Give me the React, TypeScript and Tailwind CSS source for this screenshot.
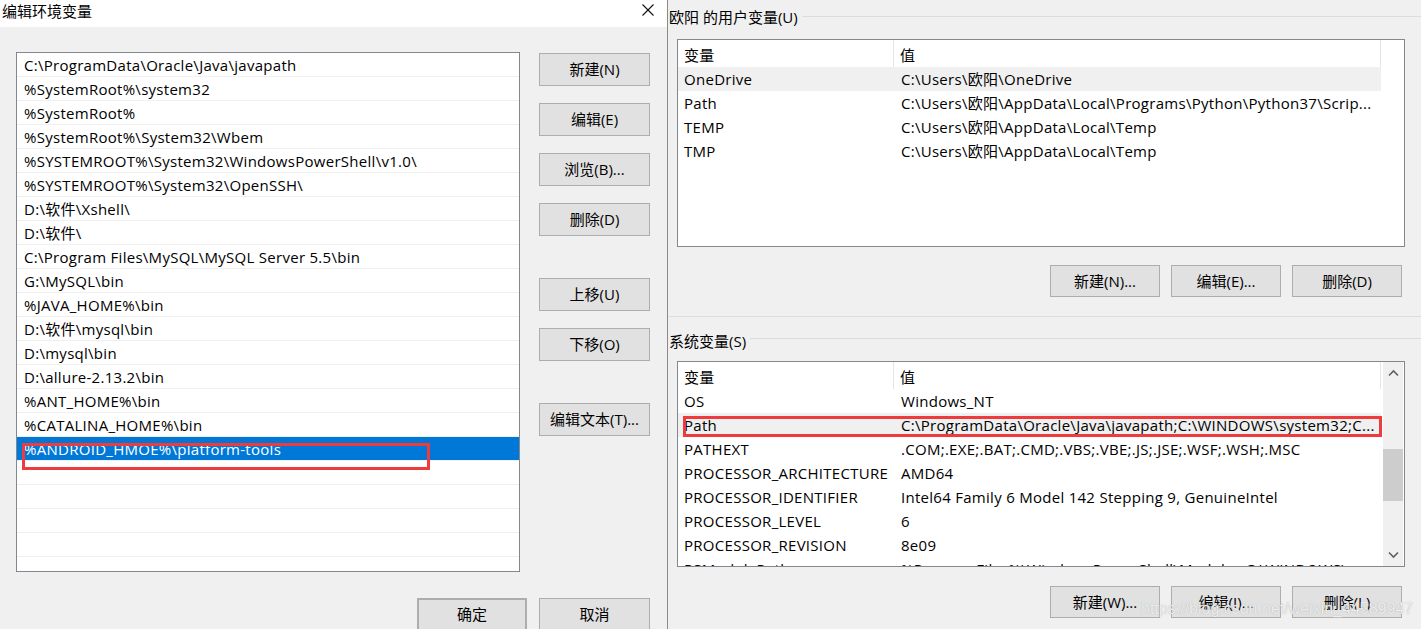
import type { ReactNode } from "react";

const pathItems = [
  "C:\\ProgramData\\Oracle\\Java\\javapath",
  "%SystemRoot%\\system32",
  "%SystemRoot%",
  "%SystemRoot%\\System32\\Wbem",
  "%SYSTEMROOT%\\System32\\WindowsPowerShell\\v1.0\\",
  "%SYSTEMROOT%\\System32\\OpenSSH\\",
  "D:\\软件\\Xshell\\",
  "D:\\软件\\",
  "C:\\Program Files\\MySQL\\MySQL Server 5.5\\bin",
  "G:\\MySQL\\bin",
  "%JAVA_HOME%\\bin",
  "D:\\软件\\mysql\\bin",
  "D:\\mysql\\bin",
  "D:\\allure-2.13.2\\bin",
  "%ANT_HOME%\\bin",
  "%CATALINA_HOME%\\bin",
  "%ANDROID_HMOE%\\platform-tools",
  "",
  "",
  "",
  "",
  "",
];

const userVars = [
  ["OneDrive", "C:\\Users\\欧阳\\OneDrive"],
  ["Path", "C:\\Users\\欧阳\\AppData\\Local\\Programs\\Python\\Python37\\Scrip..."],
  ["TEMP", "C:\\Users\\欧阳\\AppData\\Local\\Temp"],
  ["TMP", "C:\\Users\\欧阳\\AppData\\Local\\Temp"],
];

const systemVars = [
  ["OS", "Windows_NT"],
  ["Path", "C:\\ProgramData\\Oracle\\Java\\javapath;C:\\WINDOWS\\system32;C..."],
  ["PATHEXT", ".COM;.EXE;.BAT;.CMD;.VBS;.VBE;.JS;.JSE;.WSF;.WSH;.MSC"],
  ["PROCESSOR_ARCHITECTURE", "AMD64"],
  ["PROCESSOR_IDENTIFIER", "Intel64 Family 6 Model 142 Stepping 9, GenuineIntel"],
  ["PROCESSOR_LEVEL", "6"],
  ["PROCESSOR_REVISION", "8e09"],
  ["PSModulePath", "%ProgramFiles%\\WindowsPowerShell\\Modules;C:\\WINDOWS\\s..."],
];

function Btn({ children, className = "" }: { children: ReactNode; className?: string }) {
  return (
    <button
      type="button"
      className={`flex shrink-0 items-center justify-center border border-[#adadad] bg-[#e1e1e1] text-[15px] text-black ${className}`}
    >
      {children}
    </button>
  );
}

function VarTable({
  rows,
  highlight,
  height,
  scrollbar,
}: {
  rows: string[][];
  highlight: number;
  height: string;
  scrollbar?: boolean;
}) {
  return (
    <div className={`ml-[9px] flex w-[728px] overflow-hidden border border-[#828790] bg-white ${height}`}>
      <div className="w-[703px] shrink-0 tracking-[0.28px]">
        {/* header */}
        <div className="flex h-[27px] items-center">
          <div className="h-full w-[216px] border-r border-[#e5e5e5] pl-[6px] leading-[30px]">变量</div>
          <div className="h-full flex-1 border-r border-[#e5e5e5] pl-[6px] leading-[30px]">值</div>
        </div>
        {rows.map(([name, value], i) => (
          <div
            key={name}
            className={`flex h-[24px] items-center whitespace-nowrap ${i === highlight ? "bg-[#f0f0f0]" : ""}`}
          >
            <div className="w-[216px] shrink-0 overflow-hidden pl-[6px]">{name}</div>
            <div className="flex-1 overflow-hidden pl-[7px]">{value}</div>
          </div>
        ))}
      </div>
      {scrollbar && (
        <div className="ml-[2px] flex w-[20px] flex-col items-center bg-[#f0f0f0]">
          <svg className="mt-[7px] h-[8px] w-[11px]" viewBox="0 0 11 8" fill="none" stroke="#606060" strokeWidth="1.6">
            <polyline points="1,6.5 5.5,2 10,6.5" />
          </svg>
          <div className="mt-[72px] h-[52px] w-full bg-[#cdcdcd]" />
          <div className="flex-1" />
          <svg className="mb-[7px] h-[8px] w-[11px]" viewBox="0 0 11 8" fill="none" stroke="#606060" strokeWidth="1.6">
            <polyline points="1,1.5 5.5,6 10,1.5" />
          </svg>
        </div>
      )}
    </div>
  );
}

export default function App() {
  return (
    <div className="relative flex h-[629px] w-[1421px] overflow-hidden bg-[#f0f0f0] font-['Open_Sans','Noto_Sans_CJK_SC',sans-serif] text-[15px] text-black">
      {/* Edit environment variable dialog */}
      <div className="flex w-[668px] shrink-0 flex-col border-r border-[#8a8a8a] bg-[#f0f0f0]">
        <div className="flex h-[27px] shrink-0 items-start justify-between bg-white">
          <span className="ml-[2px] mt-[1px] text-[15px] leading-[20px]">编辑环境变量</span>
          <svg className="mr-[13px] mt-[4px] h-[12px] w-[12px]" viewBox="0 0 12 12" stroke="#111" strokeWidth="1.1">
            <line x1="0.5" y1="0.5" x2="11.5" y2="11.5" />
            <line x1="11.5" y1="0.5" x2="0.5" y2="11.5" />
          </svg>
        </div>

        <div className="flex pl-[16px] pt-[25px]">
          <div className="relative h-[520px] w-[504px] shrink-0 overflow-hidden border border-[#828790] bg-white tracking-[0.28px]">
            {pathItems.map((item, i) => (
              <div
                key={i}
                className={`h-[24px] whitespace-nowrap border-b border-[#f0f0f0] pl-[7px] pt-[1px] leading-[23px] ${
                  i === 16 ? "bg-[#0078d7] text-white" : ""
                }`}
              >
                {item}
              </div>
            ))}
            <div className="absolute left-[5px] top-[390px] h-[27px] w-[408px] border-[3px] border-[#ef3b3b]" />
          </div>

          <div className="ml-[19px] flex w-[111px] flex-col pt-[1px]">
            <Btn className="h-[33px] w-[111px]">新建(N)</Btn>
            <Btn className="mt-[17px] h-[33px] w-[111px]">编辑(E)</Btn>
            <Btn className="mt-[17px] h-[33px] w-[111px]">浏览(B)...</Btn>
            <Btn className="mt-[17px] h-[33px] w-[111px]">删除(D)</Btn>
            <Btn className="mt-[42px] h-[33px] w-[111px]">上移(U)</Btn>
            <Btn className="mt-[17px] h-[33px] w-[111px]">下移(O)</Btn>
            <Btn className="mt-[42px] h-[33px] w-[111px]">编辑文本(T)...</Btn>
          </div>
        </div>

        <div className="mt-[26px] flex justify-end gap-[12px] pr-[17px]">
          <Btn className="h-[33px] w-[110px] border-2 border-[#0078d7]">确定</Btn>
          <Btn className="h-[33px] w-[111px]">取消</Btn>
        </div>
      </div>

      {/* Environment variables window behind */}
      <div className="flex flex-1 flex-col">
        <div className="flex pt-[7px]">
          <span className="pl-[1px] leading-[20px]">欧阳 的用户变量(U)</span>
          <div className="ml-[4px] mt-[9px] h-px flex-1 bg-[#dcdcdc]" />
        </div>
        <div className="mt-[12px]">
          <VarTable rows={userVars} highlight={0} height="h-[208px]" />
        </div>
        <div className="mt-[18px] flex gap-[11px] pl-[382px]">
          <Btn className="h-[32px] w-[110px]">新建(N)...</Btn>
          <Btn className="h-[32px] w-[110px]">编辑(E)...</Btn>
          <Btn className="h-[32px] w-[110px]">删除(D)</Btn>
        </div>
        <div className="mt-[19px] h-px bg-[#dcdcdc]" />

        <div className="mt-[14px] flex">
          <span className="pl-[1px] leading-[20px]">系统变量(S)</span>
          <div className="ml-[4px] mt-[7px] h-px flex-1 bg-[#dcdcdc]" />
        </div>
        <div className="relative mt-[10px]">
          <VarTable rows={systemVars} highlight={1} height="h-[206px]" scrollbar />
          <div className="absolute left-[15px] top-[55px] h-[21px] w-[699px] border-[3px] border-[#ef3b3b]" />
        </div>
        <div className="mt-[19px] flex gap-[11px] pl-[382px]">
          <Btn className="h-[32px] w-[110px]">新建(W)...</Btn>
          <Btn className="h-[32px] w-[110px]">编辑(I)...</Btn>
          <Btn className="h-[32px] w-[110px]">删除(L)</Btn>
        </div>
      </div>

      {/* watermark */}
      <div className="pointer-events-none absolute left-[1141px] top-[597px] font-['Liberation_Sans',sans-serif] text-[16px] text-white/80 [text-shadow:0_0_1px_#9a9a9a]">
        https://blog.csdn.net/weixin_44589947
      </div>
    </div>
  );
}
